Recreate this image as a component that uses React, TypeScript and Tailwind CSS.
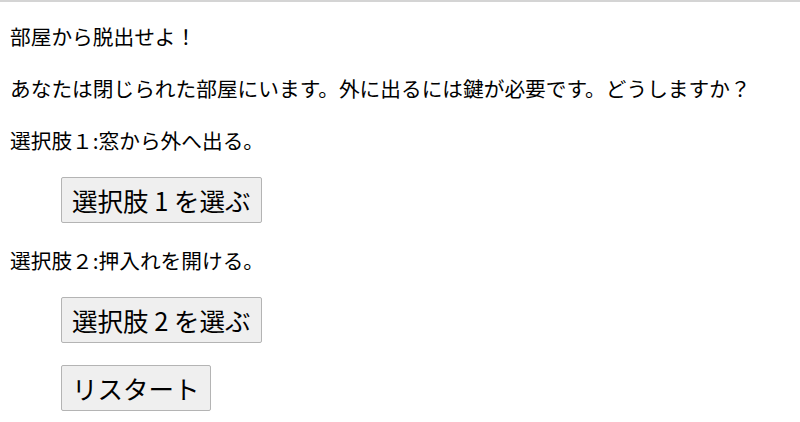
const font = { fontFamily: '"Noto Sans CJK JP", sans-serif' };

function ChoiceButton({ label }: { label: string }) {
  return (
    <div className="pl-[51px]">
      <button className="h-[46px] px-[10px] bg-[#efefef] border border-[#b4b4b4] rounded-[2px] text-[25.5px] leading-[34px] text-black">
        {label}
      </button>
    </div>
  );
}

export default function App() {
  return (
    <div
      className="w-[800px] h-[422px] bg-white border-t-2 border-[#d4d4d4] overflow-hidden text-black"
      style={font}
    >
      <div className="flex flex-col gap-[22px] pt-[19px] pl-[10px]">
        <p className="text-[20.7px] leading-[30px]">部屋から脱出せよ！</p>
        <p className="text-[20.7px] leading-[30px]">
          あなたは閉じられた部屋にいます。外に出るには鍵が必要です。どうしますか？
        </p>
        <p className="text-[20.7px] leading-[30px]">選択肢１:窓から外へ出る。</p>
        <ChoiceButton label="選択肢 1 を選ぶ" />
        <p className="text-[20.7px] leading-[30px]">選択肢２:押入れを開ける。</p>
        <ChoiceButton label="選択肢 2 を選ぶ" />
        <ChoiceButton label="リスタート" />
      </div>
    </div>
  );
}
